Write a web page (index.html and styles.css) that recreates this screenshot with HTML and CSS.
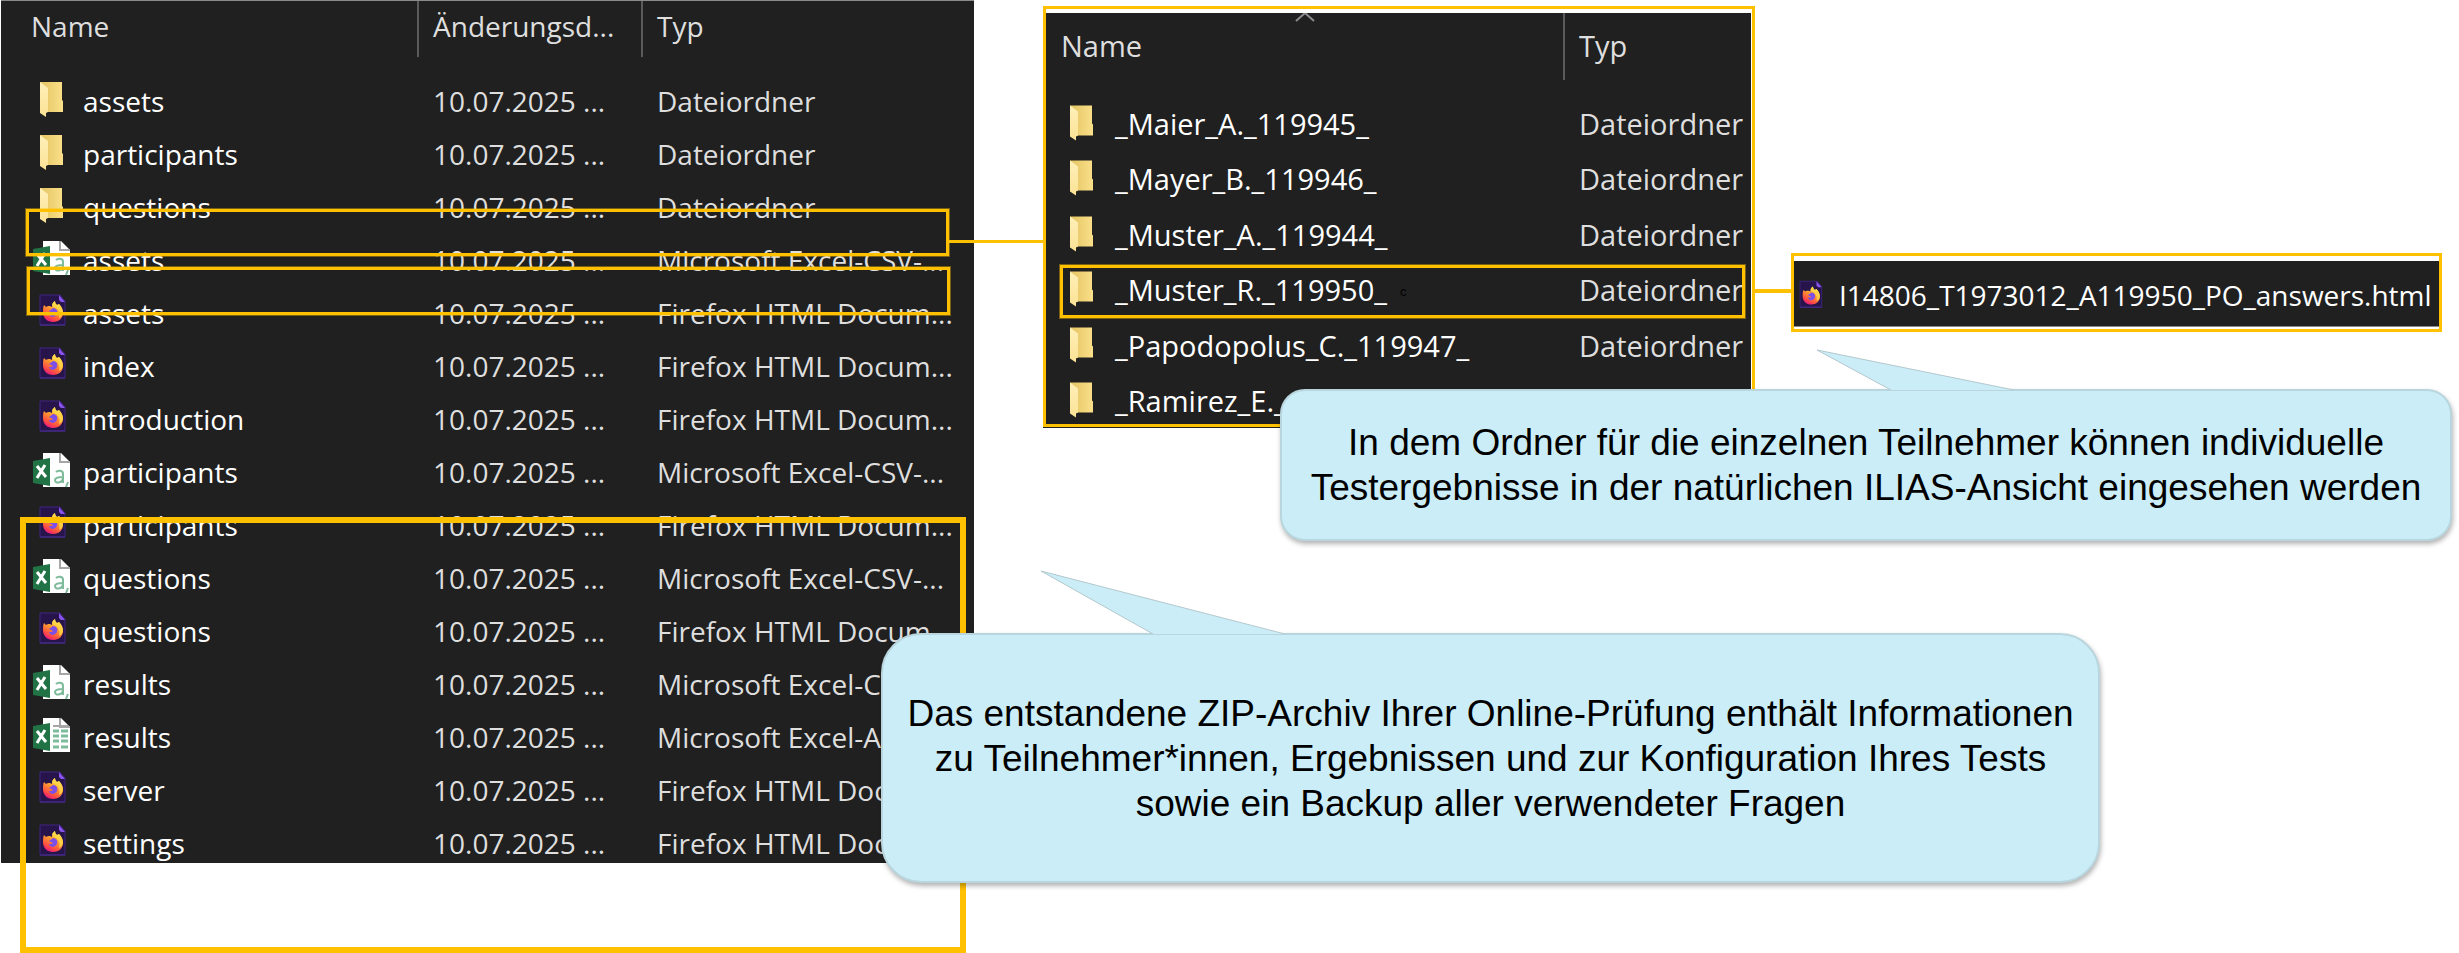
FILE: index.html
```
<!DOCTYPE html>
<html lang="de">
<head>
<meta charset="utf-8">
<title>ZIP-Archiv der Online-Prüfung</title>
<link rel="stylesheet" href="styles.css">
</head>
<body>
<svg class="defs" aria-hidden="true">
  <defs>
    <linearGradient id="fold-back" x1="0" y1="0" x2="1" y2="0"><stop offset="0.2" stop-color="#e8c96a"/><stop offset="1" stop-color="#fae08a"/></linearGradient>
    <linearGradient id="fold-front" x1="0" y1="0" x2="0" y2="1"><stop offset="0" stop-color="#fff0ba"/><stop offset="1" stop-color="#fbe294"/></linearGradient>
    <linearGradient id="fx-fire" x1="0.8" y1="0" x2="0.3" y2="1"><stop offset="0" stop-color="#fff44f"/><stop offset="0.45" stop-color="#ff9a2e"/><stop offset="0.8" stop-color="#ff4a45"/><stop offset="1" stop-color="#e31587"/></linearGradient>
    <symbol id="folder" viewBox="0 0 37 35">
      <path d="M7 0h22v18l1 1v11H7z" fill="url(#fold-back)"/>
      <path d="M7 0l8 6v24l-2 1v4l-6-4z" fill="url(#fold-front)"/>
    </symbol>
    <symbol id="firefox" viewBox="0 0 37 35">
      <path d="M7 1h20l5 6v24H7z" fill="#26144a" stroke="#3f2480"/>
      <path d="M7 31h25" stroke="#4a2c92"/>
      <path d="M26 1l6 7h-4l-2-2z" fill="#8a55ee"/>
      <path d="M10 18c0-3 0-5 1-7l2 2c1-1 2-1 4-1l2 1c0-3 1-5 3-6 0 2 1 3 2 4l2-1c3 3 4 6 4 9 0 5-4 9-10 9s-10-4-10-10z" fill="url(#fx-fire)"/>
      <path d="M16 17c2-1 3-3 5-3 3 1 4 3 3 6-1 2-3 3-5 3-2-1-3-2-3-3 2 0 3 0 4-1-1-1-3-1-4-2z" fill="#7b4fe8"/>
      <path d="M22 7c0 2 1 3 2 4l2-1c3 3 4 6 4 9-1 3-2 4-4 5 1-4 0-8-3-10-2-1-4-2-4-3s1-3 3-4z" fill="#ffd84a" opacity=".8"/>
    </symbol>
    <symbol id="sheet" viewBox="0 0 37 35">
      <path d="M10 0h18l9 9v25H10z" fill="#fff"/>
      <path d="M27 0v9h10" fill="none" stroke="#a6a6a6" stroke-width="2"/>
    </symbol>
    <symbol id="x-badge" viewBox="0 0 37 35">
      <path d="M0 8l17-3v28L0 30z" fill="#217346"/>
      <path d="M4 13l9 11M12 12L4 25" stroke="#fff" stroke-width="3" fill="none"/>
    </symbol>
    <symbol id="csv" viewBox="0 0 37 35">
      <use href="#sheet"/>
      <path d="M23 19c2-2 7-2 7 2v9M30 24c-5 0-8 1-8 3 0 4 7 3 8-1M35 29l-2 5" fill="none" stroke="#7dbb9b" stroke-width="2"/>
      <use href="#x-badge"/>
    </symbol>
    <symbol id="excel" viewBox="0 0 37 35">
      <use href="#sheet"/>
      <path d="M20 8h15" stroke="#a6a6a6" stroke-width="2"/>
      <path d="M20 13h6M28 13h7M20 18h6M28 18h7M20 23h6M28 23h7M20 29h6M28 29h7" stroke="#7dbb9b" stroke-width="3"/>
      <use href="#x-badge"/>
    </symbol>
  </defs>
</svg>

<main class="stage">
  <section class="archive">
    <table class="files">
      <colgroup><col class="col-name"><col class="col-date"><col></colgroup>
      <thead><tr><th><span class="head">Name</span></th><th><span class="head split">Änderungsd...</span></th><th><span class="head split">Typ</span></th></tr></thead>
      <tbody>
        <tr><td><span class="file"><svg class="icon"><use href="#folder"/></svg>assets</span></td><td>10.07.2025 ...</td><td>Dateiordner</td></tr>
        <tr><td><span class="file"><svg class="icon"><use href="#folder"/></svg>participants</span></td><td>10.07.2025 ...</td><td>Dateiordner</td></tr>
        <tr><td><span class="file"><svg class="icon"><use href="#folder"/></svg>questions</span></td><td>10.07.2025 ...</td><td>Dateiordner</td></tr>
        <tr><td><span class="file"><svg class="icon"><use href="#csv"/></svg>assets</span></td><td>10.07.2025 ...</td><td>Microsoft Excel-CSV-...</td></tr>
        <tr><td><span class="file"><svg class="icon"><use href="#firefox"/></svg>assets</span></td><td>10.07.2025 ...</td><td>Firefox HTML Docum...</td></tr>
        <tr><td><span class="file"><svg class="icon"><use href="#firefox"/></svg>index</span></td><td>10.07.2025 ...</td><td>Firefox HTML Docum...</td></tr>
        <tr><td><span class="file"><svg class="icon"><use href="#firefox"/></svg>introduction</span></td><td>10.07.2025 ...</td><td>Firefox HTML Docum...</td></tr>
        <tr><td><span class="file"><svg class="icon"><use href="#csv"/></svg>participants</span></td><td>10.07.2025 ...</td><td>Microsoft Excel-CSV-...</td></tr>
        <tr><td><span class="file"><svg class="icon"><use href="#firefox"/></svg>participants</span></td><td>10.07.2025 ...</td><td>Firefox HTML Docum...</td></tr>
        <tr><td><span class="file"><svg class="icon"><use href="#csv"/></svg>questions</span></td><td>10.07.2025 ...</td><td>Microsoft Excel-CSV-...</td></tr>
        <tr><td><span class="file"><svg class="icon"><use href="#firefox"/></svg>questions</span></td><td>10.07.2025 ...</td><td>Firefox HTML Docum...</td></tr>
        <tr><td><span class="file"><svg class="icon"><use href="#csv"/></svg>results</span></td><td>10.07.2025 ...</td><td>Microsoft Excel-CSV-...</td></tr>
        <tr><td><span class="file"><svg class="icon"><use href="#excel"/></svg>results</span></td><td>10.07.2025 ...</td><td>Microsoft Excel-A...</td></tr>
        <tr><td><span class="file"><svg class="icon"><use href="#firefox"/></svg>server</span></td><td>10.07.2025 ...</td><td>Firefox HTML Docum...</td></tr>
        <tr><td><span class="file"><svg class="icon"><use href="#firefox"/></svg>settings</span></td><td>10.07.2025 ...</td><td>Firefox HTML Docum...</td></tr>
      </tbody>
    </table>
    <div class="frame frame-participants"></div>
    <div class="frame frame-assets"></div>
    <div class="frame-results"></div>
    <div class="link-participants"></div>
  </section>

  <section class="participants">
    <div class="pane">
      <svg class="sort" viewBox="0 0 20 9"><path d="M1 8l9-8 9 8" fill="none" stroke="#8c8c8c" stroke-width="2"/></svg>
      <table class="files large">
        <colgroup><col class="col-person"><col></colgroup>
        <thead><tr><th><span class="head">Name</span></th><th><span class="head split">Typ</span></th></tr></thead>
        <tbody>
          <tr><td><span class="file"><svg class="icon"><use href="#folder"/></svg>_Maier_A._119945_</span></td><td>Dateiordner</td></tr>
          <tr><td><span class="file"><svg class="icon"><use href="#folder"/></svg>_Mayer_B._119946_</span></td><td>Dateiordner</td></tr>
          <tr><td><span class="file"><svg class="icon"><use href="#folder"/></svg>_Muster_A._119944_</span></td><td>Dateiordner</td></tr>
          <tr><td><span class="file"><svg class="icon"><use href="#folder"/></svg>_Muster_R._119950_</span></td><td>Dateiordner</td></tr>
          <tr><td><span class="file"><svg class="icon"><use href="#folder"/></svg>_Papodopolus_C._119947_</span></td><td>Dateiordner</td></tr>
          <tr><td><span class="file"><svg class="icon"><use href="#folder"/></svg>_Ramirez_E._</span></td><td></td></tr>
        </tbody>
      </table>
    </div>
    <div class="frame frame-muster"></div>
    <span class="mark">c</span>
    <div class="link-answers"></div>
  </section>

  <section class="answers">
    <div class="answer-file"><svg class="icon"><use href="#firefox"/></svg>I14806_T1973012_A119950_PO_answers.html</div>
  </section>

  <aside class="callout callout-person">
    <svg class="tail tail-person" viewBox="0 0 200 42"><path d="M75 41L1 1l197 40" fill="#cbedf7" stroke="#b3c8ce"/></svg>
    <p>In dem Ordner für die einzelnen Teilnehmer können individuelle<br>Testergebnisse in der natürlichen ILIAS-Ansicht eingesehen werden</p>
  </aside>
  <aside class="callout callout-archive">
    <svg class="tail tail-archive" viewBox="0 0 246 65"><path d="M113 64L1 1l244 63" fill="#cbedf7" stroke="#b3c8ce"/></svg>
    <p>Das entstandene ZIP-Archiv Ihrer Online-Prüfung enthält Informationen<br>zu Teilnehmer*innen, Ergebnissen und zur Konfiguration Ihres Tests<br>sowie ein Backup aller verwendeter Fragen</p>
  </aside>
</main>
</body>
</html>
```
FILE: styles.css
```
* { box-sizing: border-box; }
body {
  margin: 0;
  background: #fff;
  font-family: "Open Sans", "Noto Sans", sans-serif;
  color: #fff;
}
.defs { position: absolute; width: 0; height: 0; }

.stage {
  position: relative;
  display: grid;
  grid-template-columns: minmax(0, 973fr) minmax(0, 69fr) minmax(0, 712fr) minmax(0, 36fr) minmax(0, 651fr);
  align-items: start;
  padding: 0 17px 0 1px;
  min-height: 953px;
  overflow: hidden;
}

.archive { position: relative; grid-column: 1; background: #202020; border-top: 1px solid #8a8a8a; }
.participants {
  position: relative;
  grid-column: 3;
  margin-top: 6px;
  padding: 4px 1px 0 0;
  border: 3px solid #ffc000;
  box-shadow: 0 1px 0 #202020;
}
.answers {
  grid-column: 5;
  margin-top: 253px;
  padding: 5px 0 2px;
  border: 3px solid #ffc000;
}

.files { width: 100%; table-layout: fixed; border-collapse: collapse; font-size: 28px; line-height: 38px; }
.col-name { width: 416px; }
.col-date { width: 224px; }
.col-person { width: 517px; }
th, td { padding: 0; text-align: left; font-weight: 400; white-space: nowrap; vertical-align: top; color: #dedede; }
th { height: 67px; }
td { height: 53px; padding: 14px 0 0 16px; }
td:first-child { padding-left: 32px; }
.head { display: block; height: 56px; padding: 6px 0 0 30px; }
.split { border-left: 2px solid #5a5a5a; padding-left: 14px; }
.file { display: flex; gap: 13px; color: #fff; }
.icon { display: block; flex: none; width: 37px; height: 35px; }

.pane { position: relative; background: #202020; }
.large { font-size: 29px; }
.large th { height: 78px; }
.large .head { height: 67px; padding: 14px 0 0 15px; }
.large .split { padding-left: 14px; }
.large td { height: 55px; padding-top: 14px; }
.large tr:nth-child(even) td { height: 56px; }
.large td:first-child { padding-left: 17px; }
.large .file { gap: 15px; }
.large .icon { height: 36px; }
.sort { position: absolute; top: 0; left: 249px; width: 20px; height: 9px; }

.answer-file {
  display: flex;
  align-items: center;
  gap: 13px;
  height: 66px;
  padding: 3px 0 0 0;
  background: #202020;
  border-bottom: 1px solid #8a8a8a;
  font-size: 28px;
  white-space: nowrap;
}
.answer-file .icon { width: 32px; }

.frame { position: absolute; border: 3px solid #ffc000; box-shadow: 0 0 0 1px rgba(255, 192, 0, .4); }
.frame-participants { top: 208px; left: 25px; right: 25px; height: 47px; }
.frame-assets { top: 266px; left: 26px; right: 24px; height: 48px; }
.frame-results { position: absolute; top: 516px; left: 19px; right: 8px; height: 436px; border: 6px solid #ffc000; }
.frame-muster { top: 256px; left: 14px; right: 7px; height: 53px; }
.link-participants { position: absolute; top: 239px; left: calc(100% - 25px); width: 97px; height: 3px; background: #ffc000; }
.link-answers { position: absolute; top: 280px; left: 100%; width: 40px; height: 4px; background: #ffc000; }
.mark { position: absolute; top: 275px; left: 354px; font: 13px/15px "Liberation Sans", Arial, sans-serif; color: #000; }

.callout {
  position: absolute;
  display: flex;
  align-items: center;
  justify-content: center;
  border: 2px solid #b9d6de;
  background: #cbedf7;
  box-shadow: 1px 3px 5px rgba(0, 0, 0, .3);
  font: 37px/45px "Liberation Sans", Arial, sans-serif;
  color: #000;
  text-align: center;
  white-space: nowrap;
}
.callout p { margin: 0; }
.callout-person { top: 389px; right: 7px; width: 1172px; height: 152px; border-radius: 25px; }
.callout-archive { top: 633px; left: 881px; width: 1219px; height: 250px; border-radius: 40px; }
.tail { position: absolute; }
.tail-person { top: -42px; left: 534px; width: 200px; height: 42px; }
.tail-archive { top: -65px; left: 157px; width: 246px; height: 65px; }
```
